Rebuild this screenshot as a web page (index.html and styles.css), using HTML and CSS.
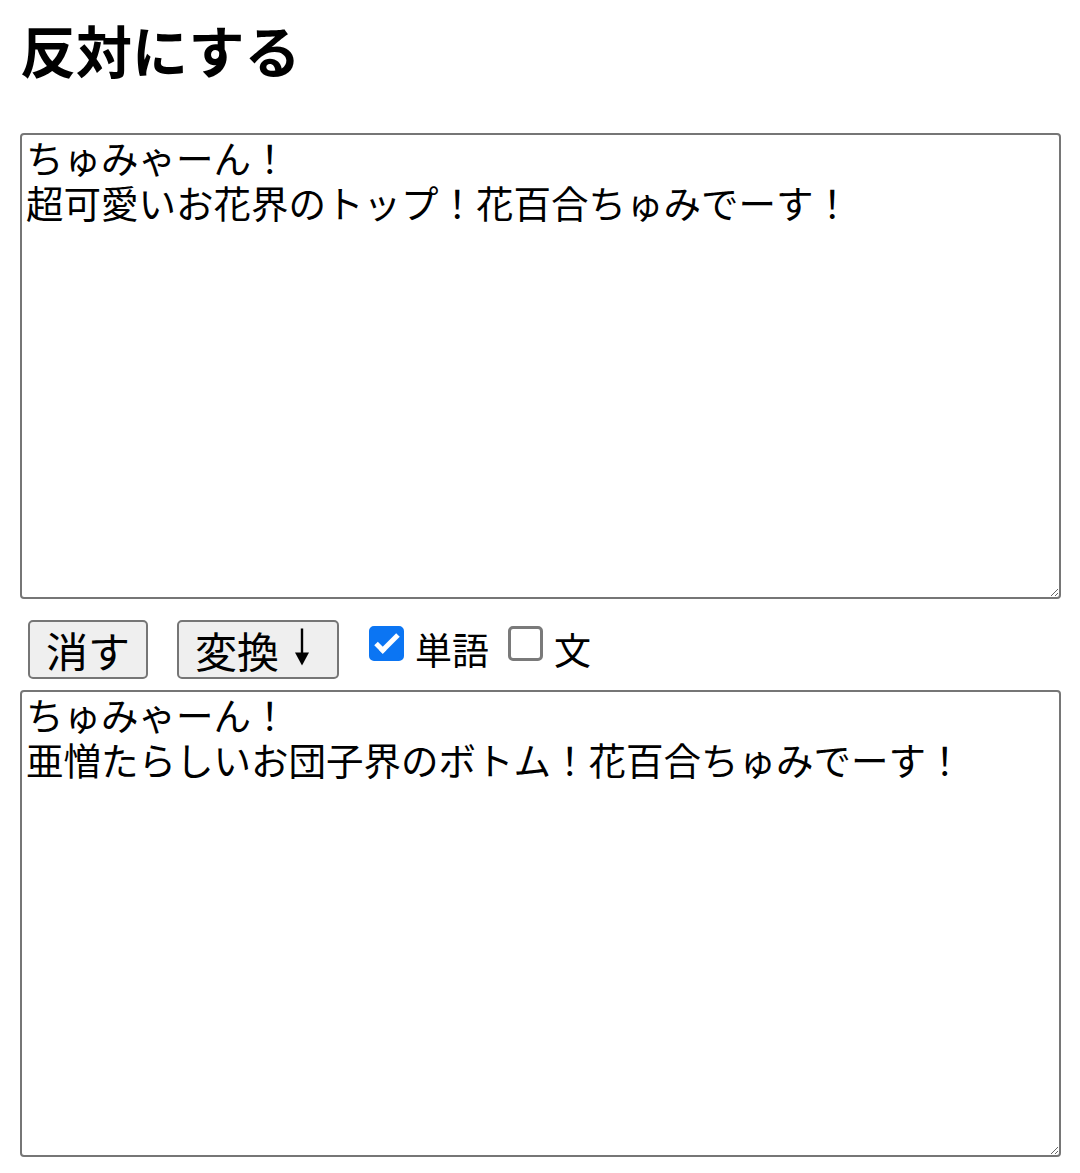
FILE: index.html
```html
<!DOCTYPE html>
<html lang="ja">
<head>
<meta charset="utf-8">
<title>反対にする</title>
<link rel="stylesheet" href="styles.css">
</head>
<body>
<h1 class="title">反対にする</h1>
<textarea class="box box-in">ちゅみゃーん！
超可愛いお花界のトップ！花百合ちゅみでーす！</textarea>
<div class="controls">
  <button class="btn btn-clear" type="button">消す</button>
  <button class="btn btn-convert" type="button">変換<svg class="arrow" width="42" height="46" viewBox="0 0 42 46" aria-label="↓"><rect x="21.8" y="1.5" width="2.4" height="26" fill="#000"/><polygon points="16,25.5 30,25.5 23,38.5" fill="#000"/></svg></button>
  <input class="chk chk-word" type="checkbox" id="word" checked>
  <label class="lbl lbl-word" for="word">単語</label>
  <input class="chk chk-sent" type="checkbox" id="sent">
  <label class="lbl lbl-sent" for="sent">文</label>
</div>
<textarea class="box box-out">ちゅみゃーん！
亜憎たらしいお団子界のボトム！花百合ちゅみでーす！</textarea>
</body>
</html>
```
FILE: styles.css
```css
html, body {
  margin: 0;
  padding: 0;
  background: #ffffff;
}
body {
  padding: 0 20px;
  font-family: "Noto Sans CJK JP", "Noto Sans", sans-serif;
  color: #000000;
}
.title {
  margin: 21px 0 56px;
  font-size: 56px;
  line-height: 56px;
  font-weight: 700;
  font-family: "Noto Sans CJK JP", sans-serif;
}
.box {
  display: block;
  box-sizing: border-box;
  width: 1041px;
  height: 466px;
  margin: 0;
  padding: 0 4px;
  border: 2px solid #767676;
  border-radius: 4px;
  font-family: "Noto Sans CJK JP", sans-serif;
  font-size: 37.5px;
  line-height: 44.6px;
  color: #000000;
  background: #ffffff;
  resize: both;
}
.box-out {
  height: 467px;
}
.controls {
  display: flex;
  align-items: center;
  height: 59px;
  margin: 21px 0 11px;
}
.btn {
  display: inline-flex;
  align-items: center;
  box-sizing: border-box;
  height: 59px;
  margin: 0;
  padding: 3px 16px;
  border: 2px solid #767676;
  border-radius: 5px;
  background: #efefef;
  color: #000000;
  font-family: "Noto Sans CJK JP", sans-serif;
  font-size: 42px;
  line-height: 49px;
}
.arrow {
  display: block;
  flex: none;
}
.btn-clear {
  margin-left: 8px;
}
.btn-convert {
  margin-left: 29px;
}
.chk {
  -webkit-appearance: none;
  appearance: none;
  position: relative;
  box-sizing: border-box;
  width: 35px;
  height: 35px;
  margin: 0;
  align-self: flex-start;
  margin-top: 6px;
  border: 3px solid #7a7a7a;
  border-radius: 5px;
  background: #ffffff;
}
.chk:checked {
  background: #0b75f3;
  border-color: #0b75f3;
}
.chk:checked::after {
  content: "";
  position: absolute;
  box-sizing: border-box;
  left: 9px;
  top: 0px;
  width: 12px;
  height: 24px;
  border-right: 5px solid #ffffff;
  border-bottom: 5px solid #ffffff;
  transform: rotate(45deg);
}
.chk-word {
  margin-left: 30px;
}
.chk-sent {
  margin-left: 19px;
}
.lbl {
  font-family: "Noto Sans CJK JP", sans-serif;
  font-size: 37px;
  line-height: 45px;
  margin-left: 11px;
}
```
